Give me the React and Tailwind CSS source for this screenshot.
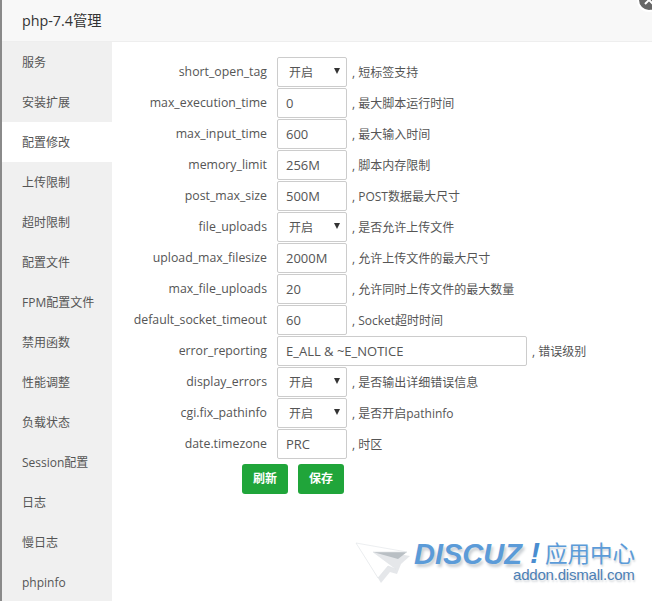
import React from 'react';

const font = { fontFamily: '"Open Sans", "Noto Sans CJK SC", sans-serif' };

const tabs = ['服务', '安装扩展', '配置修改', '上传限制', '超时限制', '配置文件', 'FPM配置文件', '禁用函数', '性能调整', '负载状态', 'Session配置', '日志', '慢日志', 'phpinfo'];

const rows = [
  { name: 'short_open_tag', value: '开启', select: true, note: '短标签支持' },
  { name: 'max_execution_time', value: '0', note: '最大脚本运行时间' },
  { name: 'max_input_time', value: '600', note: '最大输入时间' },
  { name: 'memory_limit', value: '256M', note: '脚本内存限制' },
  { name: 'post_max_size', value: '500M', note: 'POST数据最大尺寸' },
  { name: 'file_uploads', value: '开启', select: true, note: '是否允许上传文件' },
  { name: 'upload_max_filesize', value: '2000M', note: '允许上传文件的最大尺寸' },
  { name: 'max_file_uploads', value: '20', note: '允许同时上传文件的最大数量' },
  { name: 'default_socket_timeout', value: '60', note: 'Socket超时时间' },
  { name: 'error_reporting', value: 'E_ALL & ~E_NOTICE', wide: true, note: '错误级别' },
  { name: 'display_errors', value: '开启', select: true, note: '是否输出详细错误信息' },
  { name: 'cgi.fix_pathinfo', value: '开启', select: true, note: '是否开启pathinfo' },
  { name: 'date.timezone', value: 'PRC', note: '时区' },
];

function Row({ row }) {
  return (
    <div className="flex items-center h-[30px] mb-px">
      <label className="w-[155px] mr-[10px] pt-px text-right text-[12.3px] text-[#555]">{row.name}</label>
      {row.select ? (
        <div className="w-[70px] h-[30px] border border-[#ccc] rounded-[2px] bg-white flex items-center justify-between pl-[11px] pr-[6px] text-[12px] text-[#555]">
          <span className="pt-px">{row.value}</span>
          <span className="w-0 h-0 border-x-[3.5px] border-x-transparent border-t-[6px] border-t-[#333] mb-[2px]" />
        </div>
      ) : (
        <input
          readOnly
          value={row.value}
          className={`${row.wide ? 'w-[250px]' : 'w-[70px]'} h-[30px] border border-[#ccc] rounded-[2px] bg-white pl-[8px] text-[13px] text-[#555] outline-none`}
          style={font}
        />
      )}
      <span className="ml-[5px] pt-px text-[12px] text-[#555]">, {row.note}</span>
    </div>
  );
}

function Watermark() {
  return (
    <div className="absolute left-[354px] top-[538px] w-[290px] h-[50px]">
      <svg className="absolute left-0 top-[2px]" width="56" height="44" viewBox="0 0 56 44">
        <path d="M4 5 L55 14 L46 22 L42 32 L35 30 L26 41 Z" fill="#cfd4d8" opacity="0.55" transform="translate(1 2)" />
        <path d="M19 12 L53 12 L44 19 Z" fill="#b9bfc4" />
        <path d="M2 3 L53 12 L19 12 L42 29 L34 26 L24 38 Z" fill="#ffffff" stroke="#dfe3e6" strokeWidth="0.6" />
      </svg>
      <span className="absolute left-[60px] top-[-1px] text-[29px] leading-[34px] font-bold italic text-[#5b9bd8] [text-shadow:2px_3px_3px_#c9ced3]" style={{ fontFamily: '"Liberation Sans", sans-serif' }}>DISCUZ</span>
      <span className="absolute left-[176px] top-[-2px] text-[30px] leading-[34px] font-bold italic text-[#4a8dd0]" style={{ fontFamily: '"Liberation Sans", sans-serif' }}>!</span>
      <span className="absolute left-[191px] top-[0px] text-[22.5px] leading-[28px] text-[#5b9bd8] [text-shadow:1px_2px_2px_#d2d6da] whitespace-nowrap" style={{ fontFamily: '"Noto Sans CJK SC", sans-serif' }}>应用中心</span>
      <span className="absolute left-[159px] top-[27px] text-[15px] leading-[20px] tracking-[-0.2px] text-[#4c7fb5] [text-shadow:1px_2px_2px_#d2d6da] whitespace-nowrap" style={{ fontFamily: '"Liberation Sans", sans-serif' }}>addon.dismall.com</span>
    </div>
  );
}

export default function App() {
  return (
    <div className="relative w-[652px] h-[601px] overflow-hidden bg-white" style={font}>
      <div className="absolute left-0 top-0 bottom-0 w-[2px] bg-[#8a8a8a]" />
      <div className="h-[42px] ml-[2px] pl-[20px] bg-[#f8f8f8] border-b border-[#eee] text-[14.3px] leading-[42px] text-[#333]">php-7.4管理</div>
      <div className="flex ml-[2px]">
        <div className="w-[110px] h-[559px] bg-[#f0f0f0] shrink-0 overflow-hidden">
          {tabs.map((t) => (
            <div key={t} className={`h-[40px] pl-[20px] pt-px text-[12px] leading-[40px] text-[#555] ${t === '配置修改' ? 'bg-white' : ''}`}>{t}</div>
          ))}
        </div>
        <div className="pt-[15px]">
          <div>
            {rows.map((r) => <Row key={r.name} row={r} />)}
          </div>
          <div className="flex gap-[10px] pl-[130px] mt-[5px]">
            <button className="w-[46px] h-[30px] rounded-[3px] bg-[#20a53a] text-white text-[12px] font-semibold">刷新</button>
            <button className="w-[46px] h-[30px] rounded-[3px] bg-[#20a53a] text-white text-[12px] font-semibold">保存</button>
          </div>
        </div>
      </div>
      <Watermark />
      <div className="absolute left-[637px] top-[-12px] w-[24px] h-[24px] rounded-full bg-[#666] border-2 border-white flex items-center justify-center">
        <svg width="12" height="12" viewBox="0 0 12 12"><path d="M2 2 L10 10 M10 2 L2 10" stroke="#fff" strokeWidth="2" /></svg>
      </div>
    </div>
  );
}
